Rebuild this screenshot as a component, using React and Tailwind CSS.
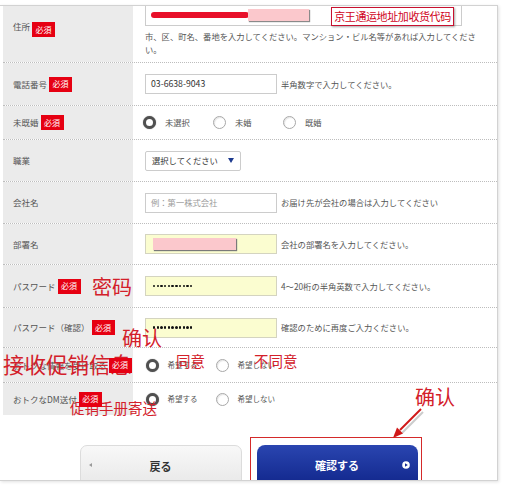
import React from "react";

const Badge = () => (
  <span className="relative z-20 inline-flex flex-none items-center justify-center w-[23px] h-[15px] bg-[#e60012] text-white text-[8px] leading-none">
    必須
  </span>
);

function Row({ label, badge, cls, labelCls = "items-center", valueCls = "items-center", children }) {
  return (
    <div className={`flex ${cls}`}>
      <div
        className={`w-[130px] flex-none bg-[#ebebeb] flex ${labelCls} pl-[10px] gap-[2px] text-[8.5px] leading-none text-[#555] whitespace-nowrap`}
      >
        <span>{label}</span>
        {badge && <Badge />}
      </div>
      <div className={`flex-1 flex ${valueCls} pl-[12px] text-[8.3px] leading-none text-[#555] whitespace-nowrap`}>
        {children}
      </div>
    </div>
  );
}

function Radio({ checked, label, textCls = "" }) {
  return (
    <span className="flex flex-none items-center w-[70px]">
      <span
        className={
          checked
            ? "flex-none w-[13px] h-[13px] rounded-full border-[3.5px] border-[#505050] bg-white shadow-[0_0_1px_#777]"
            : "flex-none w-[13px] h-[13px] rounded-full border border-[#a8a8a8] bg-white shadow-[inset_1px_1px_1px_rgba(0,0,0,0.1)]"
        }
      />
      <span className={`ml-[9px] ${textCls}`}>{label}</span>
    </span>
  );
}

const Dots = () => (
  <div className="flex items-center gap-[1.3px]">
    {Array.from({ length: 11 }).map((_, i) => (
      <span key={i} className="w-[2.4px] h-[2.4px] rounded-full bg-[#111]" />
    ))}
  </div>
);

const sep = "border-b border-dotted border-[#bdbdbd]";

export default function App() {
  return (
    <div className="relative w-[510px] h-[498px] bg-white overflow-hidden font-['Noto_Sans_CJK_JP','Noto_Sans',sans-serif]">
      <div className="relative mt-[5px] w-[498px] h-[476px] border-t border-r border-b border-[#d2d2d2] overflow-hidden shadow-[1px_1px_3px_rgba(0,0,0,0.12)]">
        <div className="ml-[3px] flex flex-col">
          <Row label="住所" badge cls={`h-[57px] ${sep}`} labelCls="items-start pt-[16px]" valueCls="flex-col items-start">
            <div className="relative w-[317px] h-[20px] border border-t-0 border-[#cccccc] bg-white">
              <span className="absolute left-[5px] top-[6px] w-[98px] h-[6px] rounded-full bg-[#e8102a]" />
              <span className="absolute left-[102px] top-[3px] w-[61px] h-[12px] bg-[#fbc8cc] shadow-[1px_1px_1px_#8a8a8a]" />
            </div>
            <div className="mt-[4px] leading-[13px]">
              市、区、町名、番地を入力してください。マンション・ビル名等があれば入力してくださ
              <br />
              い。
            </div>
          </Row>

          <Row label="電話番号" badge cls={`h-[43px] ${sep}`}>
            <div className="w-[132px] h-[20px] border border-[#cccccc] bg-white flex items-center pl-[5px] text-[8.7px] text-[#333]">
              03-6638-9043
            </div>
            <span className="ml-[4px]">半角数字で入力してください。</span>
          </Row>

          <Row label="未既婚" badge cls={`h-[34px] ${sep}`} valueCls="items-center !pl-[10px]">
            <Radio checked label="未選択" />
            <Radio label="未婚" />
            <Radio label="既婚" />
          </Row>

          <Row label="職業" cls={`h-[42px] ${sep}`}>
            <div className="w-[96px] h-[20px] border border-[#cccccc] rounded-[2px] bg-white flex items-center justify-between pl-[6px] pr-[6px] text-[#333]">
              <span>選択してください</span>
              <svg width="6" height="5" viewBox="0 0 6 5">
                <polygon points="0,0 6,0 3,5" fill="#1d3a8f" />
              </svg>
            </div>
          </Row>

          <Row label="会社名" cls={`h-[42px] ${sep}`}>
            <div className="w-[132px] h-[20px] border border-[#cccccc] bg-white flex items-center pl-[5px] text-[#9a9a9a]">
              例：第一株式会社
            </div>
            <span className="ml-[4px]">お届け先が会社の場合は入力してください</span>
          </Row>

          <Row label="部署名" cls={`h-[41px] ${sep}`}>
            <div className="relative w-[132px] h-[20px] border border-[#d4d4c0] bg-[#fbfdd0]">
              <span className="absolute left-[7px] top-[3px] w-[83px] h-[12px] bg-[#fbc8cc] shadow-[1px_1px_1px_#7a7a7a]" />
            </div>
            <span className="ml-[4px]">会社の部署名を入力してください。</span>
          </Row>

          <Row label="パスワード" badge cls={`h-[43px] ${sep}`}>
            <div className="w-[132px] h-[20px] border border-[#d4d4c0] bg-[#fbfdd0] flex items-center pl-[7px]">
              <Dots />
            </div>
            <span className="ml-[4px]">4～20桁の半角英数で入力してください。</span>
          </Row>

          <Row label="パスワード（確認）" badge cls={`h-[40px] ${sep}`}>
            <div className="w-[132px] h-[20px] border border-[#d4d4c0] bg-[#fbfdd0] flex items-center pl-[7px]">
              <Dots />
            </div>
            <span className="ml-[4px]">確認のために再度ご入力ください。</span>
          </Row>

          <Row label="おトクな情報を受け取る" badge cls={`h-[35px] ${sep}`} valueCls="items-center !pl-[12.5px]">
            <Radio checked label="希望する" textCls="text-[7.5px]" />
            <Radio label="希望しない" textCls="text-[7.5px]" />
          </Row>

          <Row label="おトクなDM送付" badge cls="h-[32px]" valueCls="items-center !pl-[12.5px]">
            <Radio checked label="希望する" textCls="text-[7.5px]" />
            <Radio label="希望しない" textCls="text-[7.5px]" />
          </Row>
        </div>

        <div className="flex justify-center gap-[15px] pt-[30px]">
          <div className="relative flex-none w-[162px] h-[45px] rounded-t-[7px] border border-[#dcdcdc] bg-linear-to-b from-[#f8f8f8] to-[#e7e7e7] flex items-start justify-center pt-[13px]">
            <span className="absolute left-[8px] top-[17px] w-0 h-0 border-y-[2.5px] border-y-transparent border-r-[3px] border-r-[#9a9a9a]" />
            <span className="text-[11px] leading-[14px] font-bold text-[#333]">戻る</span>
          </div>
          <div className="relative flex-none w-[161px] h-[45px] rounded-t-[8px] bg-linear-to-b from-[#2a45b0] to-[#0f2388] flex items-start justify-center pt-[13px]">
            <span className="text-[11px] leading-[14px] font-bold text-white">確認する</span>
            <svg className="absolute right-[8px] top-[16px]" width="8" height="8" viewBox="0 0 8 8">
              <circle cx="4" cy="4" r="3.8" fill="#ffffff" />
              <polygon points="3,2.2 5.8,4 3,5.8" fill="#142a90" />
            </svg>
          </div>
        </div>

        <div className="absolute left-[250px] top-[431px] w-[172px] h-[80px] border border-[#d42a2a]" />
      </div>

      {/* annotations */}
      <div className="absolute left-[331px] top-[7px] w-[123px] h-[19px] border border-[#c8102e] bg-white shadow-[1px_1px_2px_rgba(0,0,0,0.35)] flex items-center justify-center text-[11px] tracking-[-0.4px] leading-none text-[#d0021b] font-['Noto_Sans_CJK_SC',sans-serif] whitespace-nowrap">
        京王通运地址加收货代码
      </div>
      <div className="absolute z-10 left-[92px] top-[277px] text-[20px] leading-none text-[#d3202a] font-['Noto_Sans_CJK_SC',sans-serif]">
        密码
      </div>
      <div className="absolute z-10 left-[122px] top-[328px] text-[20px] leading-none text-[#d3202a] font-['Noto_Sans_CJK_SC',sans-serif]">
        确认
      </div>
      <div className="absolute z-10 left-[3px] top-[353px] text-[21.5px] leading-none text-[#d3202a] font-['Noto_Sans_CJK_SC',sans-serif] whitespace-nowrap">
        接收促销信息
      </div>
      <div className="absolute z-10 left-[176px] top-[354px] text-[14.5px] leading-none text-[#d3202a] font-['Noto_Sans_CJK_SC',sans-serif]">
        同意
      </div>
      <div className="absolute z-10 left-[254px] top-[354px] text-[14.5px] leading-none text-[#d3202a] font-['Noto_Sans_CJK_SC',sans-serif]">
        不同意
      </div>
      <div className="absolute z-10 left-[70px] top-[401px] text-[14.5px] leading-none text-[#d3202a] font-['Noto_Sans_CJK_SC',sans-serif] whitespace-nowrap">
        促销手册寄送
      </div>
      <div className="absolute z-10 left-[415px] top-[387px] text-[20px] leading-none text-[#d3202a] font-['Noto_Sans_CJK_SC',sans-serif]">
        确认
      </div>
      <svg className="absolute left-0 top-0 pointer-events-none" width="510" height="498" viewBox="0 0 510 498">
        <line x1="423" y1="412" x2="402" y2="433" stroke="#9a9a9a" strokeOpacity="0.5" strokeWidth="2" />
        <line x1="421" y1="409" x2="400" y2="430" stroke="#d01818" strokeWidth="2" />
        <polygon points="393,438 403,433.6 397,427.6" fill="#d01818" />
      </svg>
    </div>
  );
}
